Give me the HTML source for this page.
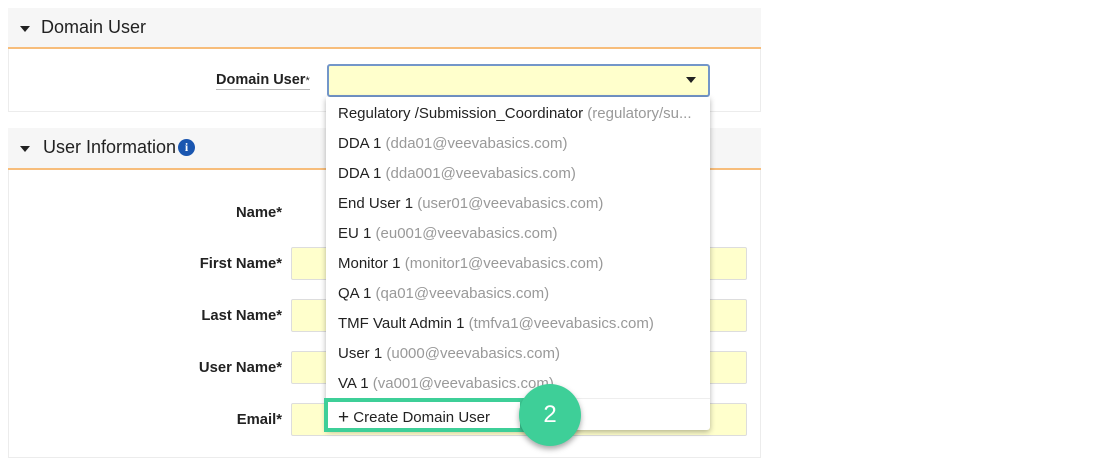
<!DOCTYPE html>
<html><head><style>
*{margin:0;padding:0;box-sizing:border-box}
body{width:1100px;height:473px;background:#fff;font-family:"Liberation Sans",Arial,sans-serif;position:relative;overflow:hidden}
.a{position:absolute}
.panel{border:1px solid #ececec;background:#fff}
.hdr{background:#f6f6f6;border-bottom:2px solid #f7bd7b}
.tri{width:0;height:0;border-left:5px solid transparent;border-right:5px solid transparent;border-top:6px solid #222}
.ht{font-size:18px;color:#222}
.lbl{font-size:14.8px;font-weight:bold;color:#222;text-align:right;width:200px}
.inp{background:#ffffcc;border:1px solid #ddd;border-radius:2px;height:33px}
.dd{background:#fff;box-shadow:0 2px 6px rgba(0,0,0,.3);border-radius:0 0 3px 3px}
.it{position:absolute;left:12px;font-size:15px;color:#222;white-space:nowrap}
.it span{color:#999}
</style></head><body>
<div class="a panel" style="left:8px;top:8px;width:753px;height:104px"></div>
<div class="a hdr" style="left:8px;top:8px;width:753px;height:41px"></div>
<div class="a tri" style="left:20px;top:26px"></div>
<div class="a ht" style="left:41px;top:17px">Domain User</div>
<div class="a" style="left:216px;top:72px;font-size:14.5px;font-weight:bold;color:#222;border-bottom:1px solid #bbb;padding-bottom:1px">Domain User<span style="font-weight:normal;font-size:11px">*</span></div>
<div class="a" style="left:327px;top:64px;width:383px;height:33px;background:#ffffcc;border:2px solid #7396c9;border-radius:3px"></div>
<div class="a tri" style="left:686px;top:77px"></div>

<div class="a panel" style="left:8px;top:128px;width:753px;height:330px"></div>
<div class="a hdr" style="left:8px;top:128px;width:753px;height:42px"></div>
<div class="a tri" style="left:20px;top:146px"></div>
<div class="a ht" style="left:43px;top:137px">User Information</div>
<div class="a" style="left:178px;top:139px;width:17px;height:17px;border-radius:50%;background:#1a56b0;color:#fff;font-size:12px;font-weight:bold;text-align:center;line-height:17px;font-family:'Liberation Serif',serif">i</div>

<div class="a lbl" style="left:82px;top:205px">Name*</div>
<div class="a lbl" style="left:82px;top:256px">First Name*</div>
<div class="a lbl" style="left:82px;top:308px">Last Name*</div>
<div class="a lbl" style="left:82px;top:360px">User Name*</div>
<div class="a lbl" style="left:82px;top:412px">Email*</div>
<div class="a inp" style="left:291px;top:247px;width:456px"></div>
<div class="a inp" style="left:291px;top:299px;width:456px"></div>
<div class="a inp" style="left:291px;top:351px;width:456px"></div>
<div class="a inp" style="left:291px;top:403px;width:456px"></div>

<div class="a dd" style="left:326px;top:97px;width:384px;height:333px">
<div class="it" style="top:8px">Regulatory /Submission_Coordinator <span>(regulatory/su...</span></div>
<div class="it" style="top:38px">DDA 1 <span>(dda01@veevabasics.com)</span></div>
<div class="it" style="top:68px">DDA 1 <span>(dda001@veevabasics.com)</span></div>
<div class="it" style="top:98px">End User 1 <span>(user01@veevabasics.com)</span></div>
<div class="it" style="top:128px">EU 1 <span>(eu001@veevabasics.com)</span></div>
<div class="it" style="top:158px">Monitor 1 <span>(monitor1@veevabasics.com)</span></div>
<div class="it" style="top:188px">QA 1 <span>(qa01@veevabasics.com)</span></div>
<div class="it" style="top:218px">TMF Vault Admin 1 <span>(tmfva1@veevabasics.com)</span></div>
<div class="it" style="top:248px">User 1 <span>(u000@veevabasics.com)</span></div>
<div class="it" style="top:278px">VA 1 <span>(va001@veevabasics.com)</span></div>
<div class="a" style="left:0;top:301px;width:384px;height:1px;background:#eee"></div>
<div class="it" style="top:309px;font-size:15px"><b style="font-size:19px;font-weight:normal;position:relative;top:1px">+</b> Create Domain User</div>
</div>
<div class="a" style="left:324px;top:398px;width:200px;height:34px;border:4px solid #3ecf98"></div>
<div class="a" style="left:519px;top:384px;width:62px;height:62px;border-radius:50%;background:#3ecf98;box-shadow:0 3px 6px rgba(0,0,0,.35);color:#fff;font-size:24px;text-align:center;line-height:62px">2</div>
</body></html>
